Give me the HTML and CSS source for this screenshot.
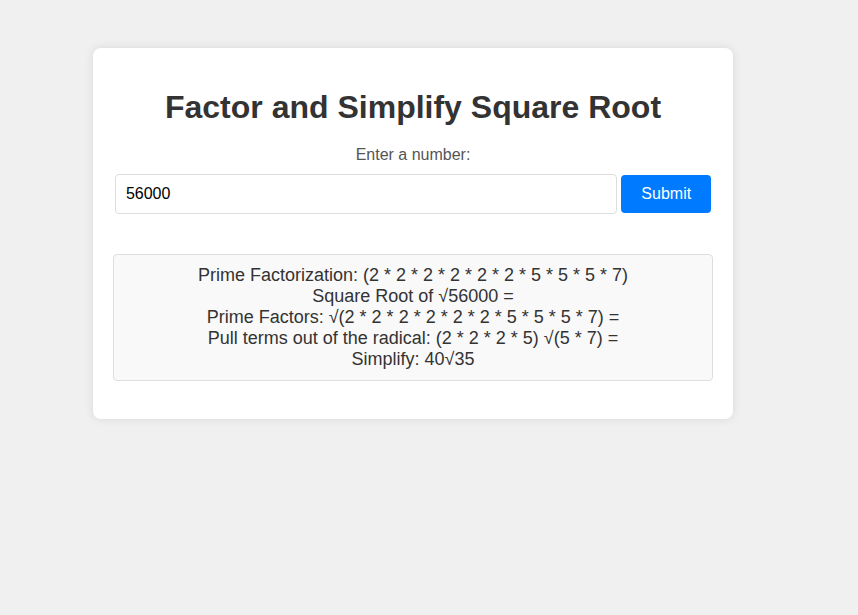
FILE: index.html
```html
<!DOCTYPE html>
<html lang="en">
<head>
<meta charset="utf-8">
<title>Factor and Simplify Square Root</title>
<link rel="stylesheet" href="styles.css">
</head>
<body>
<div class="card">
  <h1 class="title">Factor and Simplify Square Root</h1>
  <form class="form">
    <label class="label" for="num">Enter a number:</label>
    <div class="row"><input class="input" id="num" type="text" value="56000"> <button class="btn" type="button">Submit</button></div>
  </form>
  <div class="result">
    <div>Prime Factorization: (2 * 2 * 2 * 2 * 2 * 2 * 5 * 5 * 5 * 7)</div>
    <div>Square Root of √56000 =</div>
    <div>Prime Factors: √(2 * 2 * 2 * 2 * 2 * 2 * 5 * 5 * 5 * 7) =</div>
    <div>Pull terms out of the radical: (2 * 2 * 2 * 5) √(5 * 7) =</div>
    <div>Simplify: 40√35</div>
  </div>
</div>
</body>
</html>
```
FILE: styles.css
```css
html, body {
  margin: 0;
  padding: 0;
}
body {
  background: #f0f0f0;
  font-family: "Liberation Sans", Arial, sans-serif;
  color: #333;
  height: 615px;
}
.card {
  width: 600px;
  margin: 48px 0 0 93px;
  padding: 20px 20px 18px;
  background: #fff;
  border-radius: 8px;
  box-shadow: 0 0 10px rgba(0, 0, 0, 0.1);
  text-align: center;
}
.title {
  font-size: 32px;
  font-weight: bold;
  margin: 21px 0 20px;
  line-height: 37px;
  color: #333;
}
.form {
  margin: 0;
}
.label {
  display: block;
  font-size: 16px;
  color: #555;
  line-height: 18px;
  margin-bottom: 10px;
}
.row {
  text-align: center;
}
.input {
  width: 80%;
  padding: 10px;
  font-size: 16px;
  font-family: "Liberation Sans", Arial, sans-serif;
  border: 1px solid #ddd;
  border-radius: 4px;
  color: #000;
  vertical-align: middle;
  box-sizing: content-box;
  line-height: 18px;
  height: 18px;
}
.btn {
  padding: 10px 20px;
  font-size: 16px;
  font-family: "Liberation Sans", Arial, sans-serif;
  background: #007bff;
  color: #fff;
  border: none;
  border-radius: 4px;
  line-height: 18px;
  vertical-align: middle;
}
.result {
  margin-top: 40px;
  margin-bottom: 20px;
  padding: 10px;
  background: #f9f9f9;
  border: 1px solid #ddd;
  border-radius: 4px;
  font-size: 18px;
  line-height: 21px;
  color: #333;
}
```
